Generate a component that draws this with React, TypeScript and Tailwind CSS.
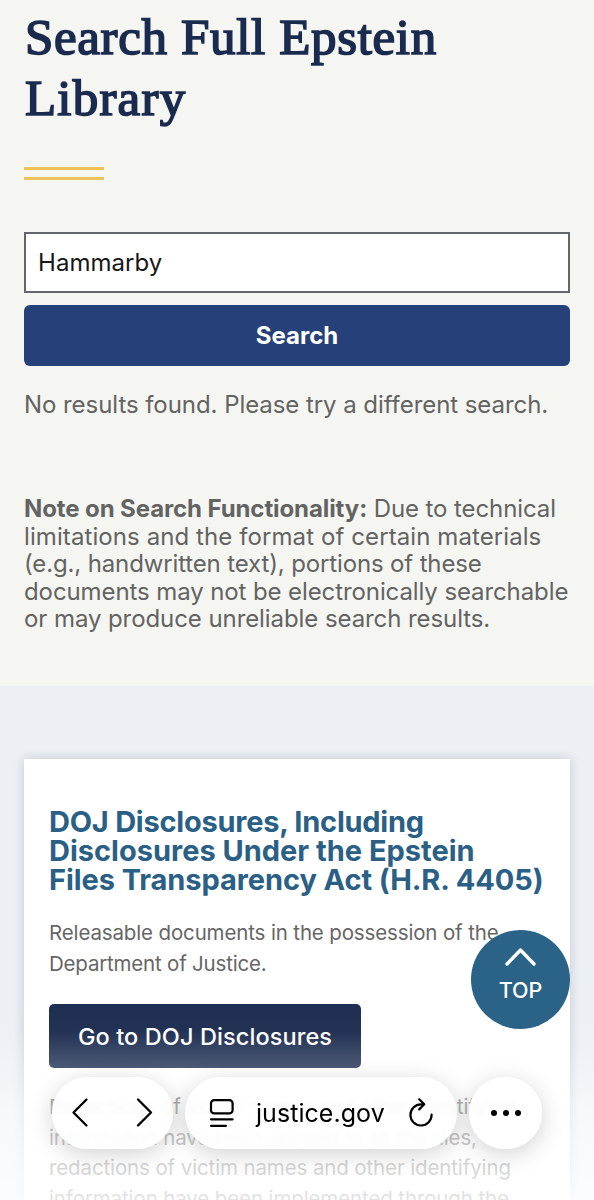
const noteLines = [
  { text: "limitations and the format of certain materials", tracking: "tracking-[0.09px]" },
  { text: "(e.g., handwritten text), portions of these", tracking: "tracking-[-0.14px]" },
  { text: "documents may not be electronically searchable", tracking: "tracking-[-0.1px]" },
  { text: "or may produce unreliable search results.", tracking: "tracking-[-0.08px]" },
];

function SearchSection() {
  return (
    <section className="h-[686px] bg-[#f5f6f1] px-6 pt-[7px] text-[#636363]">
      <h1 className="whitespace-nowrap pl-px font-['Liberation_Serif',serif] text-[51px] leading-[61px] tracking-[0.65px] text-[#1b2b4f] [-webkit-text-stroke:1.7px_#1b2b4f]">
        Search Full Epstein
        <br />
        <span className="tracking-[1.2px]">Library</span>
      </h1>
      <div className="mt-[38px] h-[13px] w-20 border-y-[3.5px] border-[#efc15c]" />
      <div className="mt-[52px] flex flex-col gap-3">
        <input
          className="h-[61px] w-full border-2 border-[#63676c] bg-white px-[12px] text-[24px] tracking-[0.05px] text-[#171717] outline-none"
          defaultValue="Hammarby"
          aria-label="Search"
        />
        <button className="h-[61px] rounded-[6px] bg-[#26417a] text-[24px] font-bold tracking-[0px] text-white">
          Search
        </button>
      </div>
      <p className="mt-[25px] whitespace-nowrap text-[24px] leading-[28px] tracking-[-0.06px]">
        No results found. Please try a different search.
      </p>
      <div className="mt-[76px] whitespace-nowrap text-[24px] leading-[27.5px] tracking-[-0.1px]">
        <p>
          <strong>Note on Search Functionality:</strong> Due to technical
        </p>
        {noteLines.map((line) => (
          <p key={line.text} className={line.tracking}>
            {line.text}
          </p>
        ))}
      </div>
    </section>
  );
}

function DisclosuresCard() {
  return (
    <div className="h-[441px] bg-white px-[25px] pt-12 shadow-[0_0_10px_rgba(30,30,45,0.18)]">
      <h2 className="whitespace-nowrap text-[29px] font-bold leading-[29px] tracking-[-0.08px] text-[#2a6086]">
        <span className="tracking-[-0.24px]">DOJ Disclosures, Including</span>
        <br />
        <span className="tracking-[0px]">Disclosures Under the Epstein</span>
        <br />
        Files Transparency Act (H.R. 4405)
      </h2>
      <p className="mt-[24px] whitespace-nowrap text-[20.5px] leading-[30.5px] tracking-[-0.14px] text-[#666]">
        Releasable documents in the possession of the
        <br />
        <span className="tracking-[-0.2px]">Department of Justice.</span>
      </p>
      <button className="mt-[25px] h-16 w-[312px] whitespace-nowrap rounded-[5px] bg-[#1b2b4f] pt-[2px] text-[23.5px] font-medium tracking-[0.1px] text-white">
        Go to DOJ Disclosures
      </button>
      <p className="mt-6 whitespace-nowrap text-[20.5px] leading-[30.5px] tracking-[-0.12px] text-[#666]">
        Redactions of victim names and other identifying
        <br />
        information have been applied to all the files,
        <br />
        redactions of victim names and other identifying
        <br />
        information have been implemented through the
      </p>
    </div>
  );
}

function TopButton() {
  return (
    <button className="absolute left-[471px] top-[930px] flex h-[99px] w-[99px] flex-col items-center rounded-full bg-[#2a6288] pt-[16px] text-white">
      <svg width="34" height="21" viewBox="0 0 34 21" fill="none" stroke="currentColor" strokeWidth="3.4" strokeLinecap="round" strokeLinejoin="round">
        <path d="M3 18 16.5 4 30 18" />
      </svg>
      <span className="mt-[9px] text-[21.5px] font-medium leading-7">TOP</span>
    </button>
  );
}

const pill =
  "flex h-[72px] items-center rounded-full border-2 border-white bg-white/90 backdrop-blur-[2px] shadow-[0_5px_24px_rgba(0,0,0,0.18)]";

function BrowserBar() {
  return (
    <nav className="absolute left-[52px] top-[1077px] flex gap-3 text-black">
      <div className={`${pill} w-[121px] justify-between px-[17px]`}>
        <svg width="20" height="32" viewBox="0 0 20 32" fill="none" stroke="currentColor" strokeWidth="2.3" strokeLinecap="round" strokeLinejoin="round">
          <path d="M15.5 2.5 2.5 15.5l13 13" />
        </svg>
        <svg width="20" height="32" viewBox="0 0 20 32" fill="none" stroke="currentColor" strokeWidth="2.3" strokeLinecap="round" strokeLinejoin="round">
          <path d="m4 2.5 13 13-13 13" />
        </svg>
      </div>
      <div className={`${pill} w-[272px] pl-[21px]`}>
        <svg width="28" height="32" viewBox="0 0 28 32" fill="none" stroke="currentColor" strokeWidth="2.2" strokeLinecap="round">
          <rect x="3" y="3.2" width="21.6" height="13.2" rx="3.2" />
          <path d="M3 22.3h21.6M3 28.8h15" />
        </svg>
        <span className="ml-5 w-[131px] whitespace-nowrap pt-[2px] text-[25px] tracking-[0.05px]">justice.gov</span>
        <svg className="ml-[20px]" width="28" height="32" viewBox="0 0 28 32" fill="none" stroke="currentColor" strokeWidth="2.2" strokeLinecap="round" strokeLinejoin="round">
          <path d="M17.3 7.3H14A10.6 10.6 0 1 0 24.6 17.6M12.2 2.2l5.1 5.1-5.1 5.1" />
        </svg>
      </div>
      <div className={`${pill} w-[73px] justify-center`}>
        <svg width="32" height="8" viewBox="0 0 32 8" fill="currentColor">
          <circle cx="4" cy="4" r="3" />
          <circle cx="16" cy="4" r="3" />
          <circle cx="28" cy="4" r="3" />
        </svg>
      </div>
    </nav>
  );
}

export default function App() {
  return (
    <main className="relative h-[1200px] w-[594px] overflow-hidden font-['Inter',sans-serif]">
      <SearchSection />
      <section className="h-[514px] bg-[#ecf0f5] px-6 pt-[73px]">
        <DisclosuresCard />
      </section>
      <div className="absolute inset-x-0 bottom-0 h-[220px] bg-[linear-gradient(to_bottom,rgba(255,255,255,0)_0%,rgba(255,255,255,0.03)_23%,rgba(255,255,255,0.22)_40%,rgba(255,255,255,0.5)_57%,rgba(255,255,255,0.72)_84%,rgba(255,255,255,0.82)_100%)]" />
      <TopButton />
      <BrowserBar />
    </main>
  );
}
